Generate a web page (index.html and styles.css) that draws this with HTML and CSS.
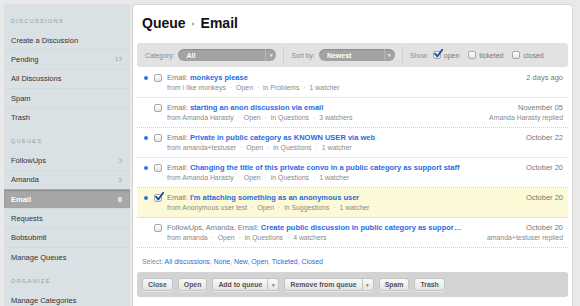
FILE: index.html
```html
<!DOCTYPE html>
<html lang="en">
<head>
    <meta charset="UTF-8">
    <title>Queue - Email</title>
    <link rel="stylesheet" href="styles.css">
</head>
<body>

<div class="app">
    <nav class="sidebar">
        <h3 class="side-head">Discussions</h3>
        <ul class="side-list">
            <li class="side-item">Create a Discussion</li>
            <li class="side-item">Pending <span class="count">13</span></li>
            <li class="side-item">All Discussions</li>
            <li class="side-item">Spam</li>
            <li class="side-item">Trash</li>
        </ul>
        <h3 class="side-head">Queues</h3>
        <ul class="side-list">
            <li class="side-item">FollowUps <span class="count">3</span></li>
            <li class="side-item">Amanda <span class="count">2</span></li>
            <li class="side-item active">Email <span class="count">6</span></li>
            <li class="side-item">Requests</li>
            <li class="side-item">Bobsubmit</li>
            <li class="side-item">Manage Queues</li>
        </ul>
        <h3 class="side-head">Organize</h3>
        <ul class="side-list">
            <li class="side-item">Manage Categories</li>
        </ul>
    </nav>

    <main class="panel">
        <h1 class="title">Queue <span class="crumb-sep"></span> Email</h1>

        <div class="filters">
            <div class="filter-group">
                <span class="filter-label">Category:</span>
                <span class="pill pill-category"><span class="pill-text">All</span><span class="pill-arrow">&#9662;</span></span>
            </div>
            <div class="filter-group">
                <span class="filter-label">Sort by:</span>
                <span class="pill pill-sort"><span class="pill-text">Newest</span><span class="pill-arrow">&#9662;</span></span>
            </div>
            <div class="filter-group">
                <span class="filter-label">Show:</span>
                <span class="box checked"><svg viewBox="0 0 10 10" width="10" height="10"><path d="M2 4.6 L4.3 7.4 L9.4 0.6" fill="none" stroke="#1d4fae" stroke-width="1.8" stroke-linecap="round" stroke-linejoin="round"/></svg></span>
                <span class="show-text">open</span>
                <span class="box"></span>
                <span class="show-text">ticketed</span>
                <span class="box"></span>
                <span class="show-text">closed</span>
            </div>
        </div>

        <ul class="queue">
            <li class="row">
                <span class="dot"></span>
                <span class="box"></span>
                <div class="info">
                    <div class="subject">Email: <a href="#">monkeys please</a></div>
                    <div class="meta">from i like monkeys <i>&middot;</i> Open <i>&middot;</i> in Problems <i>&middot;</i> 1 watcher</div>
                </div>
                <div class="when">
                    <div class="date">2 days ago</div>
                </div>
            </li>
            <li class="row">
                <span class="dot none"></span>
                <span class="box"></span>
                <div class="info">
                    <div class="subject">Email: <a href="#">starting an anon discussion via email</a></div>
                    <div class="meta">from Amanda Harasty <i>&middot;</i> Open <i>&middot;</i> in Questions <i>&middot;</i> 3 watchers</div>
                </div>
                <div class="when">
                    <div class="date">November 05</div>
                    <div class="replied">Amanda Harasty replied</div>
                </div>
            </li>
            <li class="row">
                <span class="dot"></span>
                <span class="box"></span>
                <div class="info">
                    <div class="subject">Email: <a href="#">Private in public category as KNOWN USER via web</a></div>
                    <div class="meta">from amanda+testuser <i>&middot;</i> Open <i>&middot;</i> in Questions <i>&middot;</i> 1 watcher</div>
                </div>
                <div class="when">
                    <div class="date">October 22</div>
                </div>
            </li>
            <li class="row">
                <span class="dot"></span>
                <span class="box"></span>
                <div class="info">
                    <div class="subject">Email: <a href="#">Changing the title of this private convo in a public category as support staff</a></div>
                    <div class="meta">from Amanda Harasty <i>&middot;</i> Open <i>&middot;</i> in Questions <i>&middot;</i> 1 watcher</div>
                </div>
                <div class="when">
                    <div class="date">October 20</div>
                </div>
            </li>
            <li class="row selected">
                <span class="dot"></span>
                <span class="box checked"><svg viewBox="0 0 10 10" width="10" height="10"><path d="M2 4.6 L4.3 7.4 L9.4 0.6" fill="none" stroke="#1d4fae" stroke-width="1.8" stroke-linecap="round" stroke-linejoin="round"/></svg></span>
                <div class="info">
                    <div class="subject">Email: <a href="#">I'm attaching something as an anonymous user</a></div>
                    <div class="meta">from Anonymous user test <i>&middot;</i> Open <i>&middot;</i> in Suggestions <i>&middot;</i> 1 watcher</div>
                </div>
                <div class="when">
                    <div class="date">October 20</div>
                </div>
            </li>
            <li class="row">
                <span class="dot none"></span>
                <span class="box"></span>
                <div class="info">
                    <div class="subject">FollowUps, Amanda, Email: <a href="#">Create public discussion in public category as suppor&hellip;</a></div>
                    <div class="meta">from amanda <i>&middot;</i> Open <i>&middot;</i> in Questions <i>&middot;</i> 4 watchers</div>
                </div>
                <div class="when">
                    <div class="date">October 20</div>
                    <div class="replied">amanda+testuser replied</div>
                </div>
            </li>
        </ul>

        <p class="select-line">Select: <a href="#">All discussions</a>, <a href="#">None</a>, <a href="#">New</a>, <a href="#">Open</a>, <a href="#">Ticketed</a>, <a href="#">Closed</a></p>

        <div class="actions">
            <button class="btn">Close</button>
            <button class="btn">Open</button>
            <span class="split"><button class="btn btn-main">Add to queue</button><button class="btn btn-drop">&#9662;</button></span>
            <span class="split"><button class="btn btn-main">Remove from queue</button><button class="btn btn-drop">&#9662;</button></span>
            <button class="btn">Spam</button>
            <button class="btn">Trash</button>
        </div>
    </main>
</div>

</body>
</html>
```

FILE: styles.css
```css
body {
    margin: 0;
    padding: 0;
    height: 306px;
    overflow: hidden;
    background-color: #e9e9e9;
    font-family: 'Liberation Sans', Arial, sans-serif;
    color: #333;
}
.app {
    display: flex;
    gap: 2px;
    padding: 4px 7px 0 4px;
}

/* sidebar */
.sidebar {
    width: 126px;
    flex: none;
    background-color: #d9e1e4;
    padding-top: 2px;
    height: 300px;
    overflow: hidden;
}
.side-head {
    margin: 0;
    padding: 10px 7px 4px;
    font-size: 5.4px;
    line-height: 10px;
    font-weight: normal;
    letter-spacing: 1.45px;
    text-transform: uppercase;
    color: #949ca0;
}
.side-list {
    list-style: none;
    margin: 0;
    padding: 0;
}
.side-item {
    display: flex;
    justify-content: space-between;
    align-items: center;
    height: 19.3px;
    box-sizing: border-box;
    padding: 0 8px 0 7px;
    border-top: 1px solid #d1dadd;
    font-size: 7.5px;
    color: #333;
}
.side-list .side-item:first-child {
    border-top-color: transparent;
}
.count {
    font-family: 'DejaVu Serif', serif;
    font-size: 5.6px;
    color: #8f9699;
}
.side-item.active {
    background-color: #a7a7a7;
    border-top-color: #a7a7a7;
    color: #fff;
    font-weight: bold;
    box-shadow: inset 0 1px 2px rgba(0, 0, 0, 0.15);
}
.side-item.active .count {
    color: #fff;
    font-family: 'Liberation Sans', Arial, sans-serif;
    font-size: 7px;
}

/* main panel */
.panel {
    width: 441px;
    flex: none;
    box-sizing: border-box;
    background-color: #fff;
    border: 1px solid #d6d6d6;
    border-bottom: none;
    border-radius: 4px 4px 0 0;
    padding: 0 4px;
    height: 302px;
    overflow: hidden;
}
.title {
    margin: 0;
    padding: 10px 5px 11px;
    font-size: 14px;
    line-height: 17px;
    font-weight: bold;
    color: #111;
    display: flex;
    align-items: center;
}
.crumb-sep {
    display: inline-block;
    width: 0;
    height: 0;
    border-top: 2.5px solid transparent;
    border-bottom: 2.5px solid transparent;
    border-left: 3px solid #b5b5b5;
    margin: 1px 6px 0 6px;
}

.filters {
    display: flex;
    align-items: center;
    height: 24px;
    background-color: #e2e2e2;
    border-radius: 3px;
    padding-left: 1px;
}
.filter-group {
    display: flex;
    align-items: center;
    padding: 0 7px;
    border-left: 1px solid #cfcfcf;
    height: 17px;
}
.filter-group:first-child {
    border-left: none;
}
.filter-label {
    font-size: 6.8px;
    color: #8a8a8a;
    margin-right: 4px;
}
.pill {
    display: flex;
    align-items: center;
    height: 12px;
    border-radius: 6px;
    background-color: #a3a3a3;
    color: #fff;
    font-size: 7px;
    font-weight: bold;
    box-shadow: inset 0 1px 1px rgba(0, 0, 0, 0.15);
}
.pill-category {
    width: 98px;
}
.pill-sort {
    width: 76px;
}
.pill-text {
    flex: 1;
    padding-left: 8px;
}
.pill-arrow {
    width: 10px;
    height: 12px;
    line-height: 12px;
    text-align: center;
    font-size: 5px;
    color: #e8e8e8;
    border-left: 1px solid #b6b6b6;
}

.box {
    display: inline-block;
    position: relative;
    width: 8px;
    height: 8px;
    box-sizing: border-box;
    border: 1px solid #a9a9a9;
    border-radius: 2px;
    background: linear-gradient(#ffffff, #e4e4e4);
    flex: none;
}
.box svg {
    position: absolute;
    left: -1px;
    top: -3px;
}
.show-text {
    font-size: 7px;
    color: #777;
    margin: 0 9px 0 3px;
}

/* queue list */
.queue {
    list-style: none;
    margin: 1px 0 0;
    padding: 0;
}
.row {
    display: flex;
    align-items: flex-start;
    height: 30px;
    box-sizing: border-box;
    padding: 5px 5px 4px;
    border-bottom: 1px dotted #cfcfcf;
}
.row.selected {
    background-color: #fcf9d6;
}
.dot {
    width: 4px;
    height: 4px;
    border-radius: 50%;
    background-color: #2a78e4;
    margin: 3px 6px 0 2px;
    flex: none;
}
.dot.none {
    background-color: transparent;
}
.row .box {
    margin-top: 1px;
    margin-right: 5px;
}
.info {
    flex: 1;
    min-width: 0;
}
.subject {
    font-size: 7.5px;
    line-height: 10px;
    color: #7a7a7a;
    white-space: nowrap;
    overflow: hidden;
}
.subject a {
    color: #1f6be0;
    font-weight: bold;
    text-decoration: none;
}
.meta {
    font-size: 6.9px;
    line-height: 10px;
    color: #8a8a8a;
    white-space: nowrap;
}
.meta i {
    font-style: normal;
    color: #b5b5b5;
    margin: 0 2px;
}
.when {
    text-align: right;
    flex: none;
    padding-left: 10px;
}
.date {
    font-size: 7.5px;
    line-height: 10px;
    color: #777;
}
.replied {
    font-size: 6.9px;
    line-height: 10px;
    color: #888;
}

.select-line {
    margin: 0;
    padding: 9px 5px 5px;
    font-size: 6.9px;
    line-height: 10px;
    color: #8a8a8a;
}
.select-line a {
    color: #1f6be0;
    text-decoration: none;
}

/* bottom actions */
.actions {
    display: flex;
    align-items: center;
    gap: 5px;
    height: 25px;
    padding: 0 5px;
    background-color: #d3d3d3;
    border-radius: 3px;
}
.btn {
    height: 13px;
    margin: 0;
    padding: 0 5px;
    font-family: 'Liberation Sans', Arial, sans-serif;
    font-size: 6.9px;
    font-weight: bold;
    color: #555;
    border: 1px solid #c4c4c4;
    border-radius: 3px;
    background: linear-gradient(#fafafa, #e3e3e3);
    box-shadow: 0 1px 0 rgba(255, 255, 255, 0.5);
}
.split {
    display: flex;
}
.btn-main {
    border-radius: 3px 0 0 3px;
    padding: 0 5px;
}
.btn-drop {
    border-left: none;
    border-radius: 0 3px 3px 0;
    width: 11px;
    padding: 0;
    font-size: 5px;
    color: #888;
}
```
